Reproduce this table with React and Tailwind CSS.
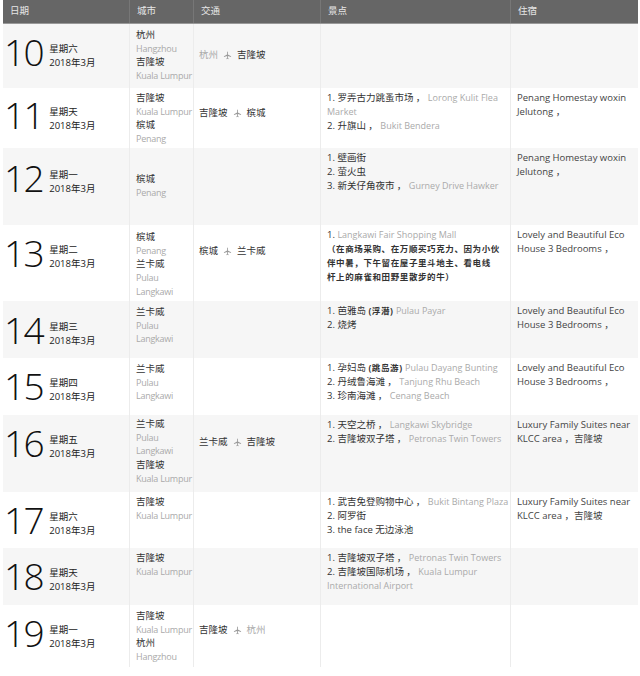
import { Fragment } from "react"

const GRAY_ROW = "bg-[#f6f6f6]"

const rows = [
    {
        day: "10", week: "星期六", h: "h-[64px]", bg: GRAY_ROW, datePt: "pt-[9px]", cityPt: "pt-[4px]",
        city: [["杭州", "Hangzhou"], ["吉隆坡", "Kuala Lumpur"]],
        trip: { from: "杭州", fromGray: true, to: "吉隆坡", pt: "pt-[24px]" },
        sights: [], stay: [],
    },
    {
        day: "11", week: "星期天", h: "h-[60px]", bg: "bg-white", datePt: "pt-[8px]", cityPt: "pt-[3px]",
        city: [["吉隆坡", "Kuala Lumpur"], ["槟城", "Penang"]],
        trip: { from: "吉隆坡", to: "槟城", pt: "pt-[18px]" },
        sights: [
            [["1. 罗弄古力跳蚤市场 ， ", "d"], ["Lorong Kulit Flea", "g"]],
            [["Market", "g"]],
            [["2. 升旗山 ， ", "d"], ["Bukit Bendera", "g"]],
        ],
        stay: ["Penang Homestay woxin", "Jelutong ，"],
    },
    {
        day: "12", week: "星期一", h: "h-[77px]", bg: GRAY_ROW, datePt: "pt-[11px]", cityPt: "pt-[24px]",
        city: [["槟城", "Penang"]],
        sights: [
            [["1. 壁画街", "d"]],
            [["2. 萤火虫", "d"]],
            [["3. 新关仔角夜市 ， ", "d"], ["Gurney Drive Hawker", "g"]],
        ],
        stay: ["Penang Homestay woxin", "Jelutong ，"],
    },
    {
        day: "13", week: "星期二", h: "h-[76px]", bg: "bg-white", datePt: "pt-[9px]", cityPt: "pt-[5px]",
        city: [["槟城", "Penang"], ["兰卡威", "Pulau", "Langkawi"]],
        trip: { from: "槟城", to: "兰卡威", pt: "pt-[19px]" },
        sights: [
            [["1. ", "d"], ["Langkawi Fair Shopping Mall", "g"]],
            [["（在商场采购、在万顺买巧克力、因为小伙", "b"]],
            [["伴中暑，下午留在屋子里斗地主、看电线", "b"]],
            [["杆上的麻雀和田野里散步的牛）", "b"]],
        ],
        stay: ["Lovely and Beautiful Eco", "House 3 Bedrooms ，"],
    },
    {
        day: "14", week: "星期三", h: "h-[57px]", bg: GRAY_ROW, datePt: "pt-[10px]", cityPt: "pt-[4px]",
        city: [["兰卡威", "Pulau", "Langkawi"]],
        sights: [
            [["1. 芭雅岛 ", "d"], ["(浮潜)", "b"], [" Pulau Payar", "g"]],
            [["2. 烧烤", "d"]],
        ],
        stay: ["Lovely and Beautiful Eco", "House 3 Bedrooms ，"],
    },
    {
        day: "15", week: "星期四", h: "h-[57px]", bg: "bg-white", datePt: "pt-[9px]", cityPt: "pt-[4px]",
        city: [["兰卡威", "Pulau", "Langkawi"]],
        sights: [
            [["1. 孕妇岛 ", "d"], ["(跳岛游)", "b"], [" Pulau Dayang Bunting", "g"]],
            [["2. 丹绒鲁海滩 ， ", "d"], ["Tanjung Rhu Beach", "g"]],
            [["3. 珍南海滩 ， ", "d"], ["Cenang Beach", "g"]],
        ],
        stay: ["Lovely and Beautiful Eco", "House 3 Bedrooms ，"],
    },
    {
        day: "16", week: "星期五", h: "h-[77px]", bg: GRAY_ROW, datePt: "pt-[9px]", cityPt: "pt-[2px]",
        city: [["兰卡威", "Pulau", "Langkawi"], ["吉隆坡", "Kuala Lumpur"]],
        trip: { from: "兰卡威", to: "吉隆坡", pt: "pt-[20px]" },
        sights: [
            [["1. 天空之桥 ， ", "d"], ["Langkawi Skybridge", "g"]],
            [["2. 吉隆坡双子塔 ， ", "d"], ["Petronas Twin Towers", "g"]],
        ],
        stay: ["Luxury Family Suites near", "KLCC area ，吉隆坡"],
    },
    {
        day: "17", week: "星期六", h: "h-[56px]", bg: "bg-white", datePt: "pt-[9px]", cityPt: "pt-[3px]",
        city: [["吉隆坡", "Kuala Lumpur"]],
        sights: [
            [["1. 武吉免登购物中心 ， ", "d"], ["Bukit Bintang Plaza", "g"]],
            [["2. 阿罗街", "d"]],
            [["3. the face 无边泳池", "d"]],
        ],
        stay: ["Luxury Family Suites near", "KLCC area ，吉隆坡"],
    },
    {
        day: "18", week: "星期天", h: "h-[57px]", bg: GRAY_ROW, datePt: "pt-[9px]", cityPt: "pt-[3px]",
        city: [["吉隆坡", "Kuala Lumpur"]],
        sights: [
            [["1. 吉隆坡双子塔 ， ", "d"], ["Petronas Twin Towers", "g"]],
            [["2. 吉隆坡国际机场 ， ", "d"], ["Kuala Lumpur", "g"]],
            [["International Airport", "g"]],
        ],
        stay: [],
    },
    {
        day: "19", week: "星期一", h: "h-[62px]", bg: "bg-white", datePt: "pt-[9px]", cityPt: "pt-[4px]",
        city: [["吉隆坡", "Kuala Lumpur"], ["杭州", "Hangzhou"]],
        trip: { from: "吉隆坡", to: "杭州", toGray: true, pt: "pt-[18px]" },
        sights: [], stay: [],
    },
]

const segClass = {
    d: "text-[#333]",
    g: "text-[#aaa] text-[9px]",
    b: "text-[#333] font-bold text-[8.5px] tracking-[0.6px]",
}

function Plane() {
    return (
        <svg viewBox="0 0 24 24" className="size-[9px] mx-[5px] fill-[#999]">
            <path d="M12 1.5c.7 0 1.1.9 1.1 2v6l8.4 4.6v1.6l-8.4-2.4v5.4l2.2 1.7v1.3L12 20.9l-3.3.8v-1.3l2.2-1.7v-5.4l-8.4 2.4v-1.6l8.4-4.6v-6c0-1.1.4-2 1.1-2z" />
        </svg>
    )
}

function Row({ row }) {
    return (
        <div className={`grid grid-cols-[126px_64px_127px_190px_128px] ${row.h} ${row.bg}`}>
            <div className={`flex items-end ${row.datePt} pl-[1px] self-start`}>
                <span className="text-[37px] leading-none font-light text-[#111] tracking-[-1.5px] font-['Open_Sans']">{row.day}</span>
                <div className="ml-[6px] flex flex-col text-[9.5px] leading-[14px] text-[#222]">
                    <span>{row.week}</span>
                    <span>2018年3月</span>
                </div>
            </div>
            <div className={`border-l border-[#ececec] pl-[6px] ${row.cityPt} text-[9.5px] leading-[13.7px] whitespace-nowrap`}>
                {row.city.map((c, i) => (
                    <Fragment key={i}>
                        <div className="text-[#333]">{c[0]}</div>
                        {c.slice(1).map(t => <div key={t} className="text-[#aaa] text-[9px] tracking-[-0.25px]">{t}</div>)}
                    </Fragment>
                ))}
            </div>
            <div className={`border-l border-[#ececec] pl-[5px] ${row.trip ? row.trip.pt : ""} text-[9.5px] leading-[14px]`}>
                {row.trip && (
                    <div className="flex items-center">
                        <span className={row.trip.fromGray ? "text-[#aaa]" : "text-[#333]"}>{row.trip.from}</span>
                        <Plane />
                        <span className={row.trip.toGray ? "text-[#aaa]" : "text-[#333]"}>{row.trip.to}</span>
                    </div>
                )}
            </div>
            <div className="border-l border-[#ececec] pl-[6px] pt-[3px] text-[9.5px] leading-[14px]">
                {row.sights.map((line, i) => (
                    <div key={i} className="whitespace-pre">
                        {line.map(([t, s], j) => <span key={j} className={segClass[s]}>{t}</span>)}
                    </div>
                ))}
            </div>
            <div className="border-l border-[#ececec] pl-[6px] pt-[3px] text-[9.5px] leading-[14px] text-[#444]">
                {row.stay.map(t => <div key={t} className="whitespace-pre">{t}</div>)}
            </div>
        </div>
    )
}

export default function App() {
    return (
        <div className="w-[640px] h-[676px] bg-white pl-[3px] font-['Open_Sans','Noto_Sans_CJK_SC',sans-serif]">
            <div className="w-[635px]">
                <div className="grid grid-cols-[126px_64px_127px_190px_128px] h-[24px] bg-[#666] border-b border-[#999] text-[9.5px] text-[#e6e6e6]">
                    <div className="pl-[7px] flex items-center">日期</div>
                    <div className="pl-[7px] flex items-center border-l border-[#777]">城市</div>
                    <div className="pl-[7px] flex items-center border-l border-[#777]">交通</div>
                    <div className="pl-[7px] flex items-center border-l border-[#777]">景点</div>
                    <div className="pl-[7px] flex items-center border-l border-[#777]">住宿</div>
                </div>
                {rows.map(r => <Row key={r.day} row={r} />)}
            </div>
        </div>
    )
}
